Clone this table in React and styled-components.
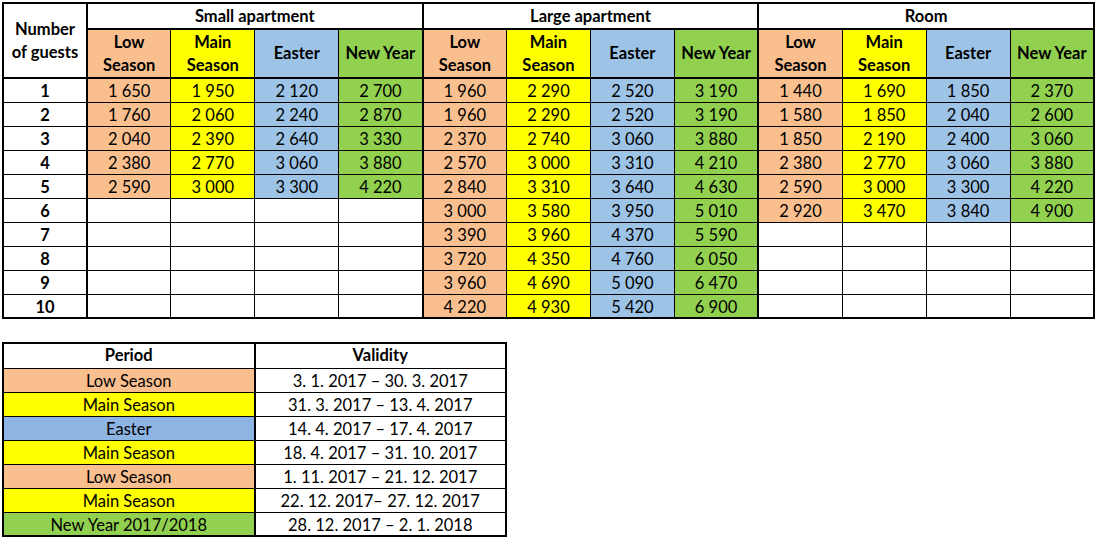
import React from "react";
import styled, { createGlobalStyle } from "styled-components";

const GlobalStyle = createGlobalStyle`
  html, body { margin: 0; padding: 0; background: #fff; }
  body { font-family: Lato, "Liberation Sans", sans-serif; color: #000; }
`;

const COLORS = {
  low: "#FABF8F",
  main: "#FFFF00",
  easter: "#9DC3E6",
  easter2: "#8DB4E2",
  ny: "#92D050",
  none: "#FFFFFF",
};

const Page = styled.div`
  display: flex;
  flex-direction: column;
  align-items: flex-start;
  gap: 23px;
  padding: 2px 0 0 2px;
`;

const Table = styled.table`
  border-collapse: collapse;
  table-layout: fixed;
  border: 2px solid #000;
  width: ${(p) => p.$width}px;
`;

const Cell = styled.td`
  border: 1px solid #000;
  padding: 2px 0 0;
  text-align: center;
  vertical-align: middle;
  font-size: 16.5px;
  line-height: 20px;
  font-weight: ${(p) => (p.$bold ? 700 : 400)};
  background: ${(p) => COLORS[p.$bg || "none"]};
  ${(p) => p.$thickRight && "border-right-width: 2px;"}
  ${(p) => p.$thickBottom && "border-bottom-width: 2px;"}
  white-space: nowrap;
`;

const HeadCell = styled(Cell).attrs({ as: "th" })`
  padding: 0;
  line-height: 23px;
  font-weight: 700;
`;

const Row = styled.tr`
  height: ${(p) => p.$h}px;
`;

const groups = [
  {
    name: "Small apartment",
    rows: [
      ["1 650", "1 950", "2 120", "2 700"],
      ["1 760", "2 060", "2 240", "2 870"],
      ["2 040", "2 390", "2 640", "3 330"],
      ["2 380", "2 770", "3 060", "3 880"],
      ["2 590", "3 000", "3 300", "4 220"],
    ],
  },
  {
    name: "Large apartment",
    rows: [
      ["1 960", "2 290", "2 520", "3 190"],
      ["1 960", "2 290", "2 520", "3 190"],
      ["2 370", "2 740", "3 060", "3 880"],
      ["2 570", "3 000", "3 310", "4 210"],
      ["2 840", "3 310", "3 640", "4 630"],
      ["3 000", "3 580", "3 950", "5 010"],
      ["3 390", "3 960", "4 370", "5 590"],
      ["3 720", "4 350", "4 760", "6 050"],
      ["3 960", "4 690", "5 090", "6 470"],
      ["4 220", "4 930", "5 420", "6 900"],
    ],
  },
  {
    name: "Room",
    rows: [
      ["1 440", "1 690", "1 850", "2 370"],
      ["1 580", "1 850", "2 040", "2 600"],
      ["1 850", "2 190", "2 400", "3 060"],
      ["2 380", "2 770", "3 060", "3 880"],
      ["2 590", "3 000", "3 300", "4 220"],
      ["2 920", "3 470", "3 840", "4 900"],
    ],
  },
];

const seasons = [
  { key: "low", label: ["Low", "Season"] },
  { key: "main", label: ["Main", "Season"] },
  { key: "easter", label: ["Easter"] },
  { key: "ny", label: ["New Year"] },
];

const periods = [
  ["low", "Low Season", "3. 1. 2017 – 30. 3. 2017"],
  ["main", "Main Season", "31. 3. 2017 – 13. 4. 2017"],
  ["easter2", "Easter", "14. 4. 2017 – 17. 4. 2017"],
  ["main", "Main Season", "18. 4. 2017 – 31. 10. 2017"],
  ["low", "Low Season", "1. 11. 2017 – 21. 12. 2017"],
  ["main", "Main Season", "22. 12. 2017– 27. 12. 2017"],
  ["ny", "New Year 2017/2018", "28. 12. 2017 – 2. 1. 2018"],
];

function PriceTable() {
  return (
    <Table $width={1093}>
      <colgroup>
        {Array.from({ length: 13 }).map((_, i) => (
          <col key={i} />
        ))}
      </colgroup>
      <thead>
        <Row $h={26}>
          <HeadCell rowSpan={2} $thickRight $thickBottom>
            Number
            <br />
            of guests
          </HeadCell>
          {groups.map((g) => (
            <HeadCell key={g.name} colSpan={4} $thickRight $thickBottom>
              {g.name}
            </HeadCell>
          ))}
        </Row>
        <Row $h={49}>
          {groups.map((g) =>
            seasons.map((s, i) => (
              <HeadCell
                key={g.name + s.key}
                $bg={s.key}
                $thickBottom
                $thickRight={i === 3}
              >
                {s.label.map((l, j) => (
                  <React.Fragment key={j}>
                    {j > 0 && <br />}
                    {l}
                  </React.Fragment>
                ))}
              </HeadCell>
            ))
          )}
        </Row>
      </thead>
      <tbody>
        {Array.from({ length: 10 }).map((_, r) => (
          <Row $h={24} key={r}>
            <Cell $bold $thickRight>
              {r + 1}
            </Cell>
            {groups.map((g) =>
              seasons.map((s, i) => {
                const v = g.rows[r];
                return (
                  <Cell
                    key={g.name + s.key}
                    $bg={v ? s.key : "none"}
                    $thickRight={i === 3}
                  >
                    {v ? v[i] : ""}
                  </Cell>
                );
              })
            )}
          </Row>
        ))}
      </tbody>
    </Table>
  );
}

function PeriodTable() {
  return (
    <Table $width={505}>
      <colgroup>
        <col />
        <col />
      </colgroup>
      <thead>
        <Row $h={25}>
          <HeadCell $thickRight>Period</HeadCell>
          <HeadCell>Validity</HeadCell>
        </Row>
      </thead>
      <tbody>
        {periods.map(([bg, name, dates], i) => (
          <Row $h={24} key={i}>
            <Cell $bg={bg} $thickRight>
              {name}
            </Cell>
            <Cell>{dates}</Cell>
          </Row>
        ))}
      </tbody>
    </Table>
  );
}

export default function App() {
  return (
    <>
      <GlobalStyle />
      <Page>
        <PriceTable />
        <PeriodTable />
      </Page>
    </>
  );
}
